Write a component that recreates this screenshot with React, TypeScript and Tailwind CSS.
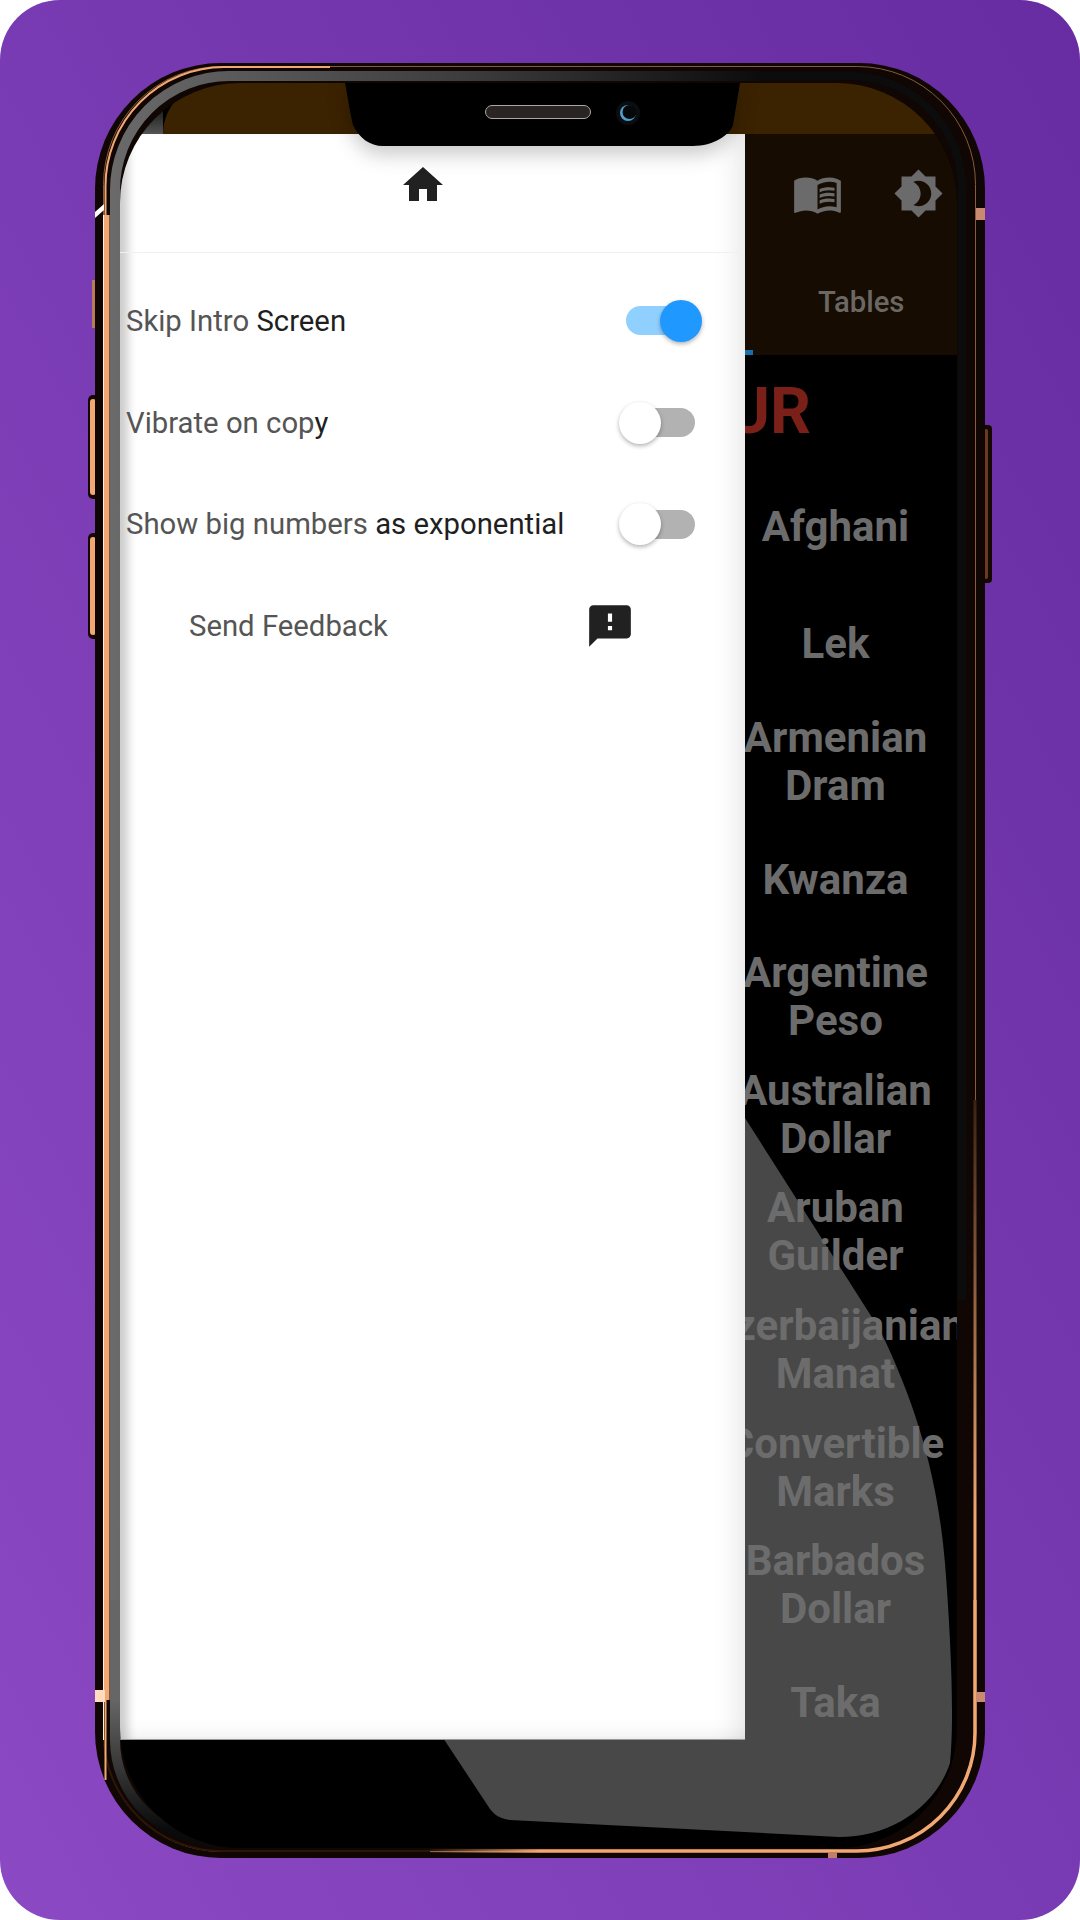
import React from "react";
import { MdBrightness4, MdFeedback, MdHome, MdMenuBook } from "react-icons/md";

const currencies = [
  ["Afghani"],
  ["Lek"],
  ["Armenian", "Dram"],
  ["Kwanza"],
  ["Argentine", "Peso"],
  ["Australian", "Dollar"],
  ["Aruban", "Guilder"],
  ["Azerbaijanian", "Manat"],
  ["Convertible", "Marks"],
  ["Barbados", "Dollar"],
  ["Taka"],
];

function PhoneFrame() {
  return (
    <svg className="absolute inset-0" width="1080" height="1920" viewBox="0 0 1080 1920" fill="none">
      <defs>
        <linearGradient id="bandTop" gradientUnits="userSpaceOnUse" x1="110" y1="0" x2="760" y2="0">
          <stop offset="0" stopColor="#6a6a6a" />
          <stop offset="0.55" stopColor="#3c3c3c" />
          <stop offset="1" stopColor="#0c0c0c" />
        </linearGradient>
        <linearGradient id="bandBottom" gradientUnits="userSpaceOnUse" x1="0" y1="1700" x2="0" y2="1830">
          <stop offset="0" stopColor="#666666" />
          <stop offset="1" stopColor="#0a0a0a" />
        </linearGradient>
        <linearGradient id="copperBottom" gradientUnits="userSpaceOnUse" x1="420" y1="0" x2="540" y2="0">
          <stop offset="0" stopColor="#f2a873" stopOpacity="0" />
          <stop offset="1" stopColor="#f2a873" />
        </linearGradient>
        <linearGradient id="copperRight" gradientUnits="userSpaceOnUse" x1="0" y1="1100" x2="0" y2="1520">
          <stop offset="0" stopColor="#3a2214" />
          <stop offset="1" stopColor="#f2a873" />
        </linearGradient>
      </defs>
      {/* side buttons */}
      <rect x="92" y="280" width="4" height="48" fill="#b97c58" />
      <rect x="88" y="395" width="12" height="104" rx="5" fill="#140803" />
      <rect x="90" y="399" width="6" height="96" rx="3" fill="#f2a873" />
      <rect x="88" y="533" width="12" height="106" rx="5" fill="#140803" />
      <rect x="90" y="537" width="6" height="98" rx="3" fill="#f2a873" />
      <rect x="980" y="425" width="12" height="158" rx="4" fill="#140803" />
      <rect x="984" y="429" width="4" height="150" rx="2" fill="#6b3a22" />
      {/* body */}
      <rect x="95" y="63" width="890" height="1795" rx="126" fill="#100603" />
      <rect x="103.5" y="66.5" width="872" height="1785" rx="118" stroke="#8a5a3c" strokeWidth="1" />
      <path d="M103.5 1733A118 118 0 0 0 221.5 1851H430" stroke="#2a1509" strokeWidth="2" />
      {/* copper edges */}
      <path d="M105.5 1780V186A119 119 0 0 1 224 67H330" stroke="#f2a873" strokeWidth="2" />
      <path d="M106.5 1700V215" stroke="#f2a873" strokeWidth="6" />
      <path d="M103.5 1740V215" stroke="#fff0e0" strokeWidth="1" />
      <path d="M430 1851H857A118 118 0 0 0 975 1733V1600" stroke="url(#copperBottom)" strokeWidth="3.5" />
      <path d="M975 1600V1100" stroke="url(#copperRight)" strokeWidth="3" />
      {/* inner metal band */}
      <path d="M115 1600V190A114 114 0 0 1 229 76H760" stroke="url(#bandTop)" strokeWidth="10" />
      <path d="M115 1600V1740A100 100 0 0 0 215 1840" stroke="url(#bandBottom)" strokeWidth="10" />
      <path d="M760 76H850A112 112 0 0 1 962 188V1300" stroke="#0c0c0c" strokeWidth="8" />
      {/* antenna marks */}
      <path d="M95 218L104 210V204L95 212Z" fill="#ffffff" />
      <rect x="95" y="1690" width="10" height="12" fill="#ffdcc0" />
      <rect x="976" y="208" width="9" height="12" fill="#c98a70" />
      <rect x="976" y="1692" width="9" height="10" fill="#c98a70" />
      <rect x="828" y="1852" width="9" height="6" fill="#c08068" />
    </svg>
  );
}

function Notch() {
  return (
    <svg
      className="absolute left-[225px] top-0 z-20 drop-shadow-[0_8px_10px_rgba(0,0,0,0.22)]"
      width="396"
      height="64"
      viewBox="0 0 396 64"
      fill="none"
    >
      <path d="M0 0C3 15 5 30 8 42C14 55 25 63 38 63H348C368 63 385 52 388 42L395 0Z" fill="#000" />
      <rect x="140.5" y="22.5" width="105" height="13" rx="6.5" fill="#2a2522" stroke="#a8a8a8" />
      <circle cx="283" cy="30" r="12" fill="#0b0d10" />
      <circle cx="283" cy="30" r="8" fill="#4f9ecb" />
      <circle cx="284.5" cy="29" r="7" fill="#06080a" />
    </svg>
  );
}

function Toggle({ on, className }: { on?: boolean; className?: string }) {
  return (
    <div className={`relative -mt-[2px] h-[42px] w-[76px] flex items-center ${className ?? ""}`}>
      {on ? (
        <>
          <div className="h-[29px] w-[66px] rounded-full bg-[#90d0ff]" />
          <div className="absolute right-0 top-0 h-[42px] w-[42px] rounded-full bg-[#1f98ff] shadow-[0_2px_4px_rgba(0,0,0,0.3)]" />
        </>
      ) : (
        <>
          <div className="ml-auto h-[29px] w-[66px] rounded-full bg-[#b2b2b2]" />
          <div className="absolute left-0 top-0 h-[42px] w-[42px] rounded-full bg-white shadow-[0_2px_4px_rgba(0,0,0,0.3)]" />
        </>
      )}
    </div>
  );
}

function SettingRow({ gray, dark, children }: { gray: string; dark: string; children: React.ReactNode }) {
  return (
    <div className="flex h-[101.7px] items-center justify-between pl-[6px]">
      <span className="text-[29.3px] text-[#555555]">
        {gray}
        <span className="text-[#1f1f1f]">{dark}</span>
      </span>
      {children}
    </div>
  );
}

function Drawer() {
  return (
    <div className="relative z-10 h-[1606px] w-[625px] shrink-0 border-b border-[#999999] bg-white shadow-[inset_14px_0_10px_-6px_rgba(0,0,0,0.2),inset_-34px_0_30px_-30px_rgba(0,0,0,0.12),inset_0_-22px_22px_-22px_rgba(0,0,0,0.1)]">
      <div className="flex h-[119px] justify-center border-b border-[#f0f0f0] pr-[19px] pt-[27px]">
        <MdHome size={48} color="#212121" />
      </div>
      <div className="pt-[18px]">
        <SettingRow gray="Skip Intro " dark="Screen">
          <Toggle on className="mr-[43px]" />
        </SettingRow>
        <SettingRow gray="Vibrate on cop" dark="y">
          <Toggle className="mr-[50px]" />
        </SettingRow>
        <SettingRow gray="Show big numbers " dark="as exponential">
          <Toggle className="mr-[50px]" />
        </SettingRow>
        <div className="flex h-[101.7px] items-center justify-between pl-[69px] pr-[110px]">
          <span className="text-[29.3px] text-[#555555]">Send Feedback</span>
          <MdFeedback size={50} color="#212121" className="-mt-[2px]" />
        </div>
      </div>
    </div>
  );
}

function CurrencyPanel() {
  return (
    <div className="relative -ml-[31px] h-[1682px] w-[243px] shrink-0 overflow-hidden">
      <div className="flex h-[221px] flex-col bg-[#160c02]">
        <div className="flex justify-end gap-[50px] pr-[13px] pt-[34px] text-[#6b6b6b]">
          <MdMenuBook size={51} />
          <MdBrightness4 size={51} />
        </div>
        <div className="mt-[66px] pl-[104px] text-[29.3px] font-medium leading-[34px] text-[#6b6864]">Tables</div>
        <div className="mt-auto h-[5px] w-[39px] bg-[#1a6fa8]" />
      </div>
      <div className="flex h-[113px] items-center justify-end pr-[146px] text-[64px] font-bold text-[#7a2018]">EUR</div>
      {currencies.map((lines) => (
        <div
          key={lines[0]}
          className="flex h-[117.6px] flex-col items-center justify-center text-[42px] font-bold leading-[48px] text-[#6c6c6c]"
        >
          {lines.map((line) => (
            <span key={line} className="whitespace-nowrap">
              {line}
            </span>
          ))}
        </div>
      ))}
    </div>
  );
}

export default function App() {
  return (
    <div className="h-[1920px] w-[1080px] bg-white font-['Roboto',sans-serif]">
      <div className="relative h-[1920px] w-[1080px] overflow-hidden rounded-[60px] bg-linear-to-tr from-[#8b49c4] to-[#672ca1] pl-[120px] pt-[83px]">
        <PhoneFrame />
        <div className="relative h-[1765px] w-[837px] overflow-hidden rounded-[120px] bg-black">
          {/* reflection on the glass, behind the list text */}
          <svg className="absolute inset-0" width="837" height="1765" viewBox="0 0 837 1765" fill="none">
            <path
              d="M625 1035L760 1247C800 1330 818 1400 825 1480C832 1570 834 1640 830 1680C815 1725 770 1754 719 1754L390 1737C378 1735 374 1731 370 1726L300 1620H625Z"
              fill="#484848"
            />
          </svg>
          <Notch />
          <div className="relative flex h-[51px]">
            <div className="w-[43px] bg-linear-to-b from-black to-[#555555]" />
            <div className="flex-1 rounded-tl-[85px] bg-[#3b2200]" />
          </div>
          <div className="relative flex">
            <Drawer />
            <CurrencyPanel />
          </div>
        </div>
      </div>
    </div>
  );
}
